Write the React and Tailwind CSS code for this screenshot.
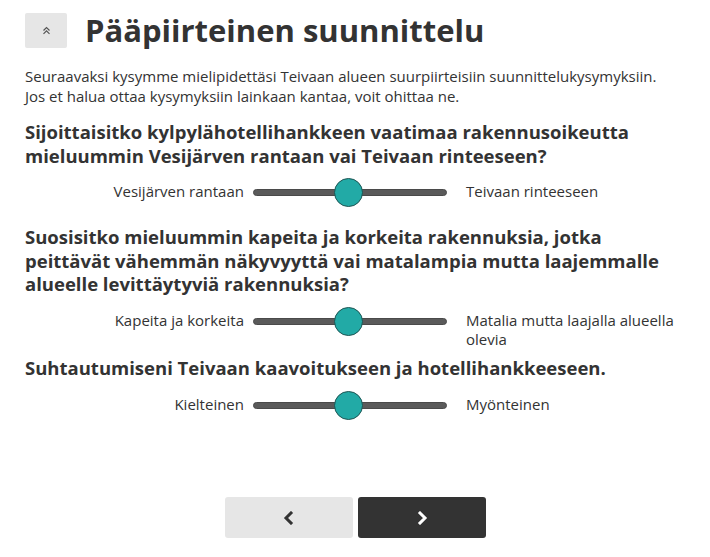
import React from 'react';

const font = { fontFamily: '"Open Sans", "Liberation Sans", sans-serif' };

const questions = [
  {
    text: 'Sijoittaisitko kylpylähotellihankkeen vaatimaa rakennusoikeutta mieluummin Vesijärven rantaan vai Teivaan rinteeseen?',
    left: 'Vesijärven rantaan',
    right: 'Teivaan rinteeseen',
    qMargin: 'mt-[14px]',
    sMargin: 'mt-[10px]',
  },
  {
    text: 'Suosisitko mieluummin kapeita ja korkeita rakennuksia, jotka peittävät vähemmän näkyvyyttä vai matalampia mutta laajemmalle alueelle levittäytyviä rakennuksia?',
    left: 'Kapeita ja korkeita',
    right: 'Matalia mutta laajalla alueella olevia',
    qMargin: 'mt-[18px]',
    sMargin: 'mt-[10px]',
  },
  {
    text: 'Suhtautumiseni Teivaan kaavoitukseen ja hotellihankkeeseen.',
    left: 'Kielteinen',
    right: 'Myönteinen',
    qMargin: 'mt-[7px]',
    sMargin: 'mt-[11px]',
  },
];

const SliderRow = ({ left, right, className }) => (
  <div className={`flex items-start text-[15px] leading-[19px] text-[#333] ${className}`}>
    <div className="w-[219px] pt-[5px] text-right">{left}</div>
    <div className="relative ml-[9px] h-[30px] w-[194px]">
      <div className="absolute left-0 right-0 top-[12px] h-[7px] rounded-full border border-[#4a4a4a] bg-[#5a5a5a]" />
      <div className="absolute left-[81px] top-[1px] h-[29px] w-[29px] rounded-full border border-[#1f5553] bg-[#22aaa6]" />
    </div>
    <div className="ml-[19px] w-[219px] pt-[5px]">{right}</div>
  </div>
);

export default function App() {
  return (
    <div className="min-h-[557px] bg-white px-[25px] pt-[12px] text-[#333]" style={font}>
      <div className="flex items-center">
        <button className="flex h-[35px] w-[42px] items-center justify-center rounded-[2px] bg-[#e6e6e6]">
          <svg width="9" height="9" viewBox="0 0 9 9" fill="none" stroke="#555" strokeWidth="1.2">
            <polyline points="1.5,4.5 4.5,1.5 7.5,4.5" />
            <polyline points="1.5,7.8 4.5,4.8 7.5,7.8" />
          </svg>
        </button>
        <h1 className="ml-[18px] text-[31px] font-bold leading-[36px] text-[#333]">Pääpiirteinen suunnittelu</h1>
      </div>

      <p className="mt-[18px] text-[15px] leading-[20px]">
        Seuraavaksi kysymme mielipidettäsi Teivaan alueen suurpiirteisiin suunnittelukysymyksiin.
        <br />
        Jos et halua ottaa kysymyksiin lainkaan kantaa, voit ohittaa ne.
      </p>

      {questions.map((q, i) => (
        <div key={i}>
          <h2 className={`${q.qMargin} text-[18.5px] font-bold leading-[23.5px] text-[#333]`}>{q.text}</h2>
          <SliderRow left={q.left} right={q.right} className={q.sMargin} />
        </div>
      ))}

      <div className="mt-[77px] flex justify-center gap-[5px]">
        <button className="flex h-[41px] w-[128px] items-center justify-center rounded-[3px] bg-[#e6e6e6]">
          <svg width="12" height="14" viewBox="0 0 12 14" fill="none" stroke="#333" strokeWidth="3" strokeLinecap="square">
            <polyline points="8,2 3,7 8,12" />
          </svg>
        </button>
        <button className="flex h-[41px] w-[128px] items-center justify-center rounded-[3px] bg-[#333]">
          <svg width="12" height="14" viewBox="0 0 12 14" fill="none" stroke="#fff" strokeWidth="3" strokeLinecap="square">
            <polyline points="4,2 9,7 4,12" />
          </svg>
        </button>
      </div>
    </div>
  );
}
